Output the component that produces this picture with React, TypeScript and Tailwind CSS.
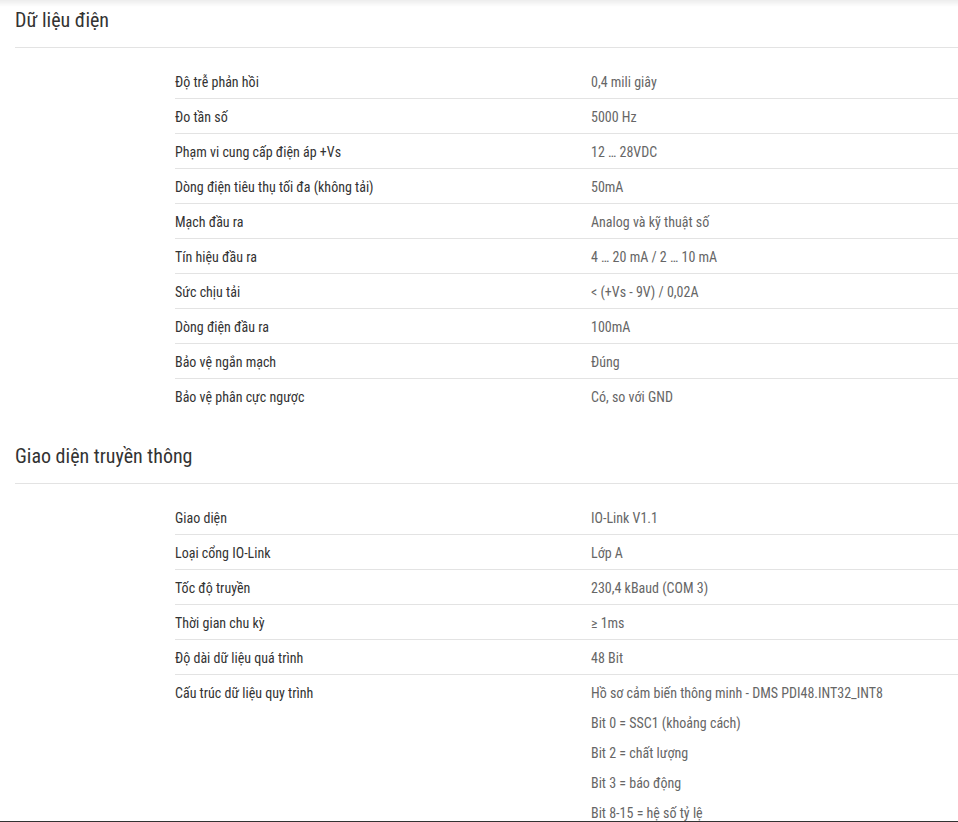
type Row = { label: string; values: string[] };

const dienRows: Row[] = [
  { label: "Độ trễ phản hồi", values: ["0,4 mili giây"] },
  { label: "Đo tần số", values: ["5000 Hz"] },
  { label: "Phạm vi cung cấp điện áp +Vs", values: ["12 … 28VDC"] },
  { label: "Dòng điện tiêu thụ tối đa (không tải)", values: ["50mA"] },
  { label: "Mạch đầu ra", values: ["Analog và kỹ thuật số"] },
  { label: "Tín hiệu đầu ra", values: ["4 … 20 mA / 2 … 10 mA"] },
  { label: "Sức chịu tải", values: ["< (+Vs - 9V) / 0,02A"] },
  { label: "Dòng điện đầu ra", values: ["100mA"] },
  { label: "Bảo vệ ngắn mạch", values: ["Đúng"] },
  { label: "Bảo vệ phân cực ngược", values: ["Có, so với GND"] },
];

const giaoDienRows: Row[] = [
  { label: "Giao diện", values: ["IO-Link V1.1"] },
  { label: "Loại cổng IO-Link", values: ["Lớp A"] },
  { label: "Tốc độ truyền", values: ["230,4 kBaud (COM 3)"] },
  { label: "Thời gian chu kỳ", values: ["≥ 1ms"] },
  { label: "Độ dài dữ liệu quá trình", values: ["48 Bit"] },
  {
    label: "Cấu trúc dữ liệu quy trình",
    values: [
      "Hồ sơ cảm biến thông minh - DMS PDI48.INT32_INT8",
      "Bit 0 = SSC1 (khoảng cách)",
      "Bit 2 = chất lượng",
      "Bit 3 = báo động",
      "Bit 8-15 = hệ số tỷ lệ",
    ],
  },
];

function Section({ title, rows }: { title: string; rows: Row[] }) {
  return (
    <section>
      <h2 className="border-b border-[#e3e3e3] pt-[6px] pb-[13px] text-[20px] leading-[28px] text-[#333]">
        {title}
      </h2>
      <div className="mt-4 ml-[160px]">
        {rows.map((row, i) => (
          <div
            key={row.label}
            className={`grid grid-cols-[416px_1fr] pt-2 pb-[6px] text-[14px] leading-5 ${
              i < rows.length - 1 ? "border-b border-[#e3e3e3]" : ""
            }`}
          >
            <div className="text-[#333]">{row.label}</div>
            <div className="space-y-[10px] text-[#666]">
              {row.values.map((v) => (
                <p key={v}>{v}</p>
              ))}
            </div>
          </div>
        ))}
      </div>
    </section>
  );
}

export default function App() {
  return (
    <div className="min-h-screen overflow-hidden bg-white pl-[15px] font-['Roboto_Condensed','Liberation_Sans_Narrow',Roboto,sans-serif]">
      <div className="pointer-events-none fixed inset-x-0 top-0 h-[7px] bg-gradient-to-b from-[rgba(0,0,0,0.07)] to-transparent" />
      <Section title="Dữ liệu điện" rows={dienRows} />
      <div className="mt-[23px]">
        <Section title="Giao diện truyền thông" rows={giaoDienRows} />
      </div>
      <div className="fixed inset-x-0 bottom-0 h-px bg-[#333]" />
    </div>
  );
}
